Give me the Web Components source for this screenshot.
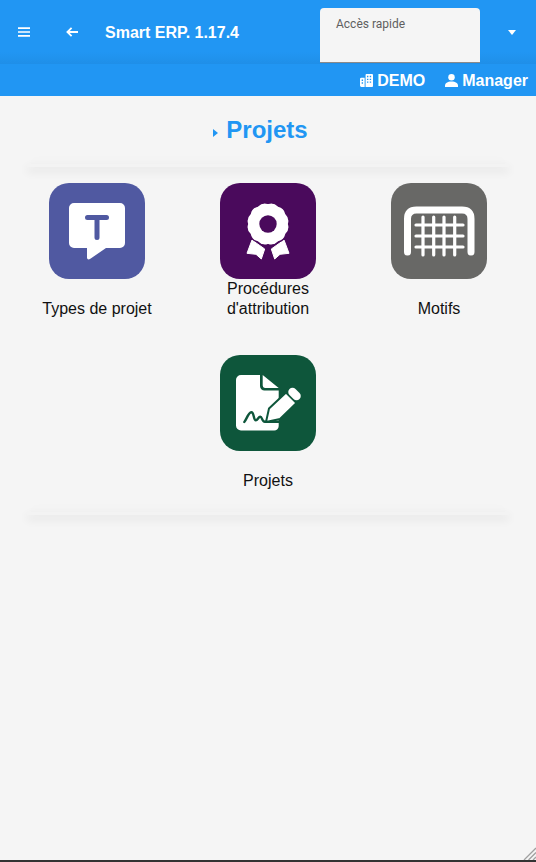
<!DOCTYPE html>
<html lang="fr">
<head>
<meta charset="utf-8">
<title>Smart ERP</title>
<style>
    html, body { margin: 0; height: 100%; }
    body {
        background: #f5f5f5;
        font-family: "Liberation Sans", Arial, sans-serif;
        overflow: hidden;
    }
</style>
</head>
<body>
<erp-app>
    <erp-toolbar slot="top" version="Smart ERP. 1.17.4"></erp-toolbar>
    <erp-subbar slot="top">
        <erp-tag icon="building">DEMO</erp-tag>
        <erp-tag icon="user">Manager</erp-tag>
    </erp-subbar>
    <erp-heading>Projets</erp-heading>
    <erp-divider></erp-divider>
    <erp-grid>
        <erp-tile icon="chat" color="#5059a1">Types de projet</erp-tile>
        <erp-tile icon="award" color="#4a0a5c">Procédures d'attribution</erp-tile>
        <erp-tile icon="goal" color="#686866">Motifs</erp-tile>
        <erp-tile icon="sign" color="#0e563b">Projets</erp-tile>
    </erp-grid>
    <erp-divider></erp-divider>
</erp-app>

<script>
// scalloped outline of the award rosette
function rosette(cx, cy, r, lobes) {
    let d = '';
    for (let i = 0; i < lobes; i++) {
        const a = (i / lobes) * Math.PI * 2 - Math.PI / 2;
        const x = (cx + r * Math.cos(a)).toFixed(1);
        const y = (cy + r * Math.sin(a)).toFixed(1);
        d += i === 0 ? `M${x} ${y}` : `A10 10 0 0 1 ${x} ${y}`;
    }
    const x0 = cx.toFixed(1);
    const y0 = (cy - r).toFixed(1);
    return `${d}A10 10 0 0 1 ${x0} ${y0}Z`;
}

const ICONS = {
    menu: '<svg viewBox="0 0 12 10" width="12" height="10"><path d="M0 .3h12v1.600H0zM0 4.200h12v1.600H0zM0 8.100h12v1.600H0z" fill="#fff"/></svg>',
    back: '<svg viewBox="0 0 12 10" width="12" height="10"><path d="M12 5H1.600M5.600 .8 1.400 5l4.200 4.200" fill="none" stroke="#fff" stroke-width="1.800"/></svg>',
    building: '<svg viewBox="0 0 14 14" width="13" height="13"><path fill="#fff" fill-rule="evenodd" d="M6 1a1 1 0 0 1 1-1h6a1 1 0 0 1 1 1v12a1 1 0 0 1-1 1H6zM7.500 2v1.500H9V2zm3 0v1.500H12V2zm-3 3v1.500H9V5zm3 0v1.500H12V5zm-3 3v1.500H9V8zm3 0v1.500H12V8zM1.500 4H5v10H1.500A1.500 1.500 0 0 1 0 12.500v-7A1.500 1.500 0 0 1 1.500 4zM1.800 6v1.500h1.500V6zm0 3v1.500h1.500V9z"/></svg>',
    user: '<svg viewBox="0 0 14 14" width="13" height="13"><circle cx="7" cy="3.500" r="3.500" fill="#fff"/><path d="M0 14v-1.500C0 10 2.500 8 7 8s7 2 7 4.500V14z" fill="#fff"/></svg>',
    chat: '<svg viewBox="0 0 96 96" width="96" height="96"><path fill="#fff" d="M25 20h46a5 5 0 0 1 5 5v35a5 5 0 0 1-5 5H57L41 76c-1.500 1-3 .3-3-1.500V65H25a5 5 0 0 1-5-5V25a5 5 0 0 1 5-5z"/><path d="M38.500 34.500h19M48 34.500v20" fill="none" stroke="#5059a1" stroke-width="5" stroke-linecap="round"/></svg>',
    award: `<svg viewBox="0 0 96 96" width="96" height="96"><path fill="#fff" stroke="#fff" stroke-width="1" stroke-linejoin="round" d="M32 57 44.700 66 41.300 76 36 71.300 27 70.300zM64 57 51.300 66 54.700 76 60 71.300 69 70.300z"/><path fill="#fff" stroke="#4a0a5c" stroke-width="1.200" d="${rosette(48, 41, 20.500, 12)}"/><circle cx="48" cy="41" r="8.700" fill="#4a0a5c"/></svg>`,
    goal: '<svg viewBox="0 0 96 96" width="96" height="96"><path d="M16.500 69V36q0-9 9-9h45.500q9 0 9 9v33" fill="none" stroke="#fff" stroke-width="7" stroke-linecap="round"/><path d="M25 42h47M25 53h47M25 64h47M32 34v38M42.700 34v38M53 34v38M63.700 34v38" fill="none" stroke="#fff" stroke-width="3.200" stroke-linecap="round"/></svg>',
    sign: '<svg viewBox="0 0 96 96" width="96" height="96"><path fill="#fff" d="M21 20h19v11a4.500 4.500 0 0 0 4.500 4.500H58.700V71a4.500 4.500 0 0 1-4.500 4.500H21a5 5 0 0 1-5-5V25a5 5 0 0 1 5-5z"/><path fill="#fff" d="M42.700 20 58.700 33H45a2.500 2.500 0 0 1-2.300-2.500z"/><path d="M24.300 67c2-2 4-9.500 7-9.700 3-.2 2 8 4.500 8 2 0 2.500-3.500 4.500-3.500s1.500 5 4.500 5H58.700" fill="none" stroke="#0e563b" stroke-width="2.400" stroke-linecap="round" stroke-linejoin="round"/><path fill="#fff" stroke="#0e563b" stroke-width="2" stroke-linejoin="round" d="M46 67 49 53.500 66 37.500 76.500 48 60 64z"/><path d="M72.500 37 76.500 41" stroke="#fff" stroke-width="8.500" stroke-linecap="round"/></svg>'
};

class ErpApp extends HTMLElement {
    constructor() {
        super();
        this.attachShadow({ mode: 'open' });
        this.shadowRoot.innerHTML = `
            <style>
                :host {
                    display: flex;
                    flex-direction: column;
                    height: 862px;
                    box-sizing: border-box;
                    border-bottom: 2px solid #333;
                    position: relative;
                }
                header { display: flex; flex-direction: column; }
                main { flex: 1; display: flex; flex-direction: column; }
                svg { position: absolute; right: 0; bottom: 0; }
            </style>
            <header><slot name="top"></slot></header>
            <main><slot></slot></main>
            <svg width="13" height="13" viewBox="0 0 13 13"><path d="M13 1 1 13M13 5.500 5.500 13M13 10l-3 3" stroke="#a0a0a0" stroke-width="1.300" fill="none"/></svg>
        `;
    }
}

class ErpToolbar extends HTMLElement {
    constructor() {
        super();
        this.attachShadow({ mode: 'open' });
    }

    connectedCallback() {
        this.shadowRoot.innerHTML = `
            <style>
                :host {
                    display: flex;
                    align-items: center;
                    height: 64px;
                    box-sizing: border-box;
                    background: linear-gradient(#2196f3 0, #2196f3 52px, #1f8fe8 64px);
                    color: #fff;
                }
                .btn { width: 24px; display: flex; justify-content: center; }
                .menu { margin-left: 12px; }
                .back { margin-left: 24px; }
                .title { margin-left: 21px; padding-top: 1px; font-size: 16px; font-weight: 700; width: 215px; white-space: nowrap; }
                .quick {
                    align-self: flex-start;
                    margin-top: 8px;
                    width: 160px;
                    height: 55px;
                    box-sizing: border-box;
                    padding: 9px 16px 0;
                    background: #f5f5f5;
                    border-radius: 4px 4px 0 0;
                    border-bottom: 1px solid #8a8a8a;
                    color: #5f5f5f;
                    font: 12px Roboto, sans-serif;
                }
                .arrow {
                    margin-left: 27.500px;
                    width: 0;
                    height: 0;
                    border: 4.500px solid transparent;
                    border-top: 5px solid #fff;
                    border-bottom: 0;
                }
            </style>
            <span class="btn menu">${ICONS.menu}</span>
            <span class="btn back">${ICONS.back}</span>
            <span class="title">${this.getAttribute('version')}</span>
            <div class="quick">Accès rapide</div>
            <span class="arrow"></span>
        `;
    }
}

class ErpSubbar extends HTMLElement {
    constructor() {
        super();
        this.attachShadow({ mode: 'open' });
        this.shadowRoot.innerHTML = `
            <style>
                :host {
                    display: flex;
                    justify-content: flex-end;
                    align-items: center;
                    gap: 20px;
                    height: 32px;
                    box-sizing: border-box;
                    padding: 1px 8px 0 0;
                    background: #2196f3;
                    color: #fff;
                }
            </style>
            <slot></slot>
        `;
    }
}

class ErpTag extends HTMLElement {
    constructor() {
        super();
        this.attachShadow({ mode: 'open' });
    }

    connectedCallback() {
        this.shadowRoot.innerHTML = `
            <style>
                :host {
                    display: inline-flex;
                    align-items: center;
                    gap: 4px;
                    font-size: 16px;
                    font-weight: 700;
                    white-space: nowrap;
                }
                svg { display: block; margin-top: -1px; }
            </style>
            ${ICONS[this.getAttribute('icon')]}<slot></slot>
        `;
    }
}

class ErpHeading extends HTMLElement {
    constructor() {
        super();
        this.attachShadow({ mode: 'open' });
        this.shadowRoot.innerHTML = `
            <style>
                :host {
                    display: flex;
                    justify-content: center;
                    align-items: center;
                    height: 68px;
                    padding-right: 15px;
                    color: #2196f3;
                    font-size: 24px;
                    font-weight: 700;
                }
                i {
                    width: 0;
                    height: 0;
                    margin: 6px 8px 0 0;
                    border: 4px solid transparent;
                    border-left: 5px solid #2196f3;
                    border-right: 0;
                }
            </style>
            <i></i><slot></slot>
        `;
    }
}

class ErpDivider extends HTMLElement {
    constructor() {
        super();
        this.attachShadow({ mode: 'open' });
        this.shadowRoot.innerHTML = `
            <style>
                :host {
                    display: block;
                    height: 3px;
                    margin: 0 27px;
                    background: #f3f3f3;
                    box-shadow: 0 4px 10px rgba(0, 0, 0, .12), 0 -3px 14px rgba(0, 0, 0, .03);
                }
            </style>
        `;
    }
}

class ErpGrid extends HTMLElement {
    constructor() {
        super();
        this.attachShadow({ mode: 'open' });
        this.shadowRoot.innerHTML = `
            <style>
                :host {
                    display: flex;
                    flex-wrap: wrap;
                    justify-content: center;
                    row-gap: 15px;
                    padding: 16px 11.500px 0;
                }
            </style>
            <slot></slot>
        `;
    }
}

class ErpTile extends HTMLElement {
    constructor() {
        super();
        this.attachShadow({ mode: 'open' });
    }

    connectedCallback() {
        const color = this.getAttribute('color');
        this.shadowRoot.innerHTML = `
            <style>
                :host {
                    display: flex;
                    flex-direction: column;
                    align-items: center;
                    width: 171px;
                    height: 157px;
                    color: #111;
                    font-size: 16px;
                    line-height: 20px;
                    text-align: center;
                }
                .icon {
                    width: 96px;
                    height: 96px;
                    flex: none;
                    border-radius: 20px;
                    background: ${color};
                }
                svg { display: block; }
                .label {
                    width: 100%;
                    height: 40px;
                    box-sizing: border-box;
                    padding: 0 20px;
                    display: flex;
                    align-items: flex-end;
                    justify-content: center;
                }
            </style>
            <div class="icon">${ICONS[this.getAttribute('icon')]}</div>
            <div class="label"><span><slot></slot></span></div>
        `;
    }
}

customElements.define('erp-app', ErpApp);
customElements.define('erp-toolbar', ErpToolbar);
customElements.define('erp-subbar', ErpSubbar);
customElements.define('erp-tag', ErpTag);
customElements.define('erp-heading', ErpHeading);
customElements.define('erp-divider', ErpDivider);
customElements.define('erp-grid', ErpGrid);
customElements.define('erp-tile', ErpTile);
</script>
</body>
</html>
